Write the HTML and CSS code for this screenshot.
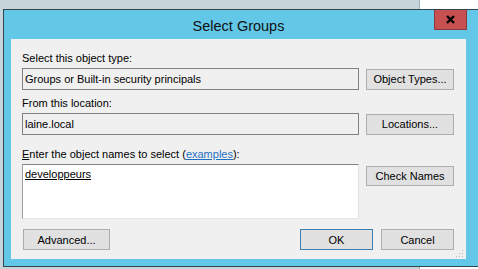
FILE: index.html
```html
<!DOCTYPE html>
<html lang="en">
<head>
  <meta charset="UTF-8" />
  <title>Select Groups</title>
  <link rel="stylesheet" href="styles.css">
</head>
<body>
  <div class="desktop">
    <div class="window">
      <div class="titlebar">
        <span class="title">Select Groups</span>
        <button class="close" aria-label="Close">
          <svg width="9" height="9" viewBox="0 0 9 9">
            <path d="M1 1 L8 8 M8 1 L1 8" stroke="#000" stroke-width="2.4" />
          </svg>
        </button>
      </div>

      <div class="client">
        <label class="label">Select this object type:</label>
        <div class="row">
          <div class="field">Groups or Built-in security principals</div>
          <button class="btn">Object Types...</button>
        </div>

        <label class="label second">From this location:</label>
        <div class="row">
          <div class="field">laine.local</div>
          <button class="btn">Locations...</button>
        </div>

        <label class="label third"><u>E</u>nter the object names to select (<a href="#">examples</a>):</label>
        <div class="row top">
          <div class="names"><u>developpeurs</u></div>
          <button class="btn check">Check Names</button>
        </div>

        <div class="actions">
          <button class="btn wide">Advanced...</button>
          <div class="spacer"></div>
          <button class="btn small default">OK</button>
          <button class="btn small">Cancel</button>
        </div>

        <div class="grip"></div>
      </div>
    </div>
  </div>
</body>
</html>
```

FILE: styles.css
```css
body {
  margin: 0;
  width: 478px;
  height: 269px;
  overflow: hidden;
  font-family: "Liberation Sans", Arial, sans-serif;
  font-size: 11px;
  color: #000;
  background: linear-gradient(to right, #c7d5da 0, #c7d5da 419px, #9fb0b6 419px, #9fb0b6 420px, #fff 420px);
}

.desktop {
  padding: 9px 0 0 3px;
}

/* window frame, cut off by the right edge like the screenshot */
.window {
  width: 475px;
  box-sizing: border-box;
  background: #63c7e8;
  border: 1px solid #33454d;
  border-right: none;
}

.titlebar {
  position: relative;
  height: 29px;
  width: 455px;
  margin-left: 7px;
  display: flex;
  align-items: center;
  justify-content: center;
}

.title {
  font-size: 14.5px;
  color: #111;
  margin-top: 2px;
}

.close {
  position: absolute;
  top: 0;
  right: -1px;
  width: 33px;
  height: 20px;
  padding: 0;
  background: #c75050;
  border: 1px solid #8f3a3a;
  border-top: none;
  display: flex;
  align-items: center;
  justify-content: center;
}

.client {
  position: relative;
  width: 455px;
  height: 220px;
  margin: 0 0 7px 7px;
  box-sizing: border-box;
  padding: 12px 12px 0 11px;
  background: #f0f0f0;
  display: flex;
  flex-direction: column;
}

.label {
  display: block;
  height: 14px;
  line-height: 14px;
  margin-bottom: 3px;
  white-space: nowrap;
}

.label.second {
  margin-top: 6px;
}

.label.third {
  margin-top: 12px;
}

.label a {
  color: #1f6fc5;
}

.row {
  display: flex;
  align-items: center;
  gap: 7px;
}

.row.top {
  align-items: flex-start;
}

.field {
  width: 337px;
  height: 22px;
  box-sizing: border-box;
  border: 1px solid #828282;
  padding: 0 2px;
  line-height: 20px;
  white-space: nowrap;
}

.names {
  width: 337px;
  height: 55px;
  box-sizing: border-box;
  background: #fff;
  border: 1px solid #e3e3e3;
  border-top-color: #828282;
  border-left-color: #a0a0a0;
  padding: 2px 2px;
  line-height: 14px;
}

.btn {
  width: 88px;
  height: 21px;
  padding: 0;
  box-sizing: border-box;
  background: #e1e1e1;
  border: 1px solid #adadad;
  font-family: inherit;
  font-size: 11px;
  color: #000;
}

.btn.check {
  margin-top: 2px;
  height: 20px;
}

.actions {
  display: flex;
  gap: 8px;
  margin-top: 10px;
  padding-left: 1px;
}

.spacer {
  flex: 1;
}

.btn.wide {
  width: 87px;
}

.btn.small {
  width: 73px;
}

.btn.default {
  border-color: #3c7fb1;
}

.grip {
  position: absolute;
  right: 3px;
  bottom: 2px;
  width: 8px;
  height: 8px;
  background: radial-gradient(circle, #b8b8b8 0.8px, transparent 1px) 0 0 / 3px 3px;
  clip-path: polygon(100% 0, 100% 100%, 0 100%);
}
```
